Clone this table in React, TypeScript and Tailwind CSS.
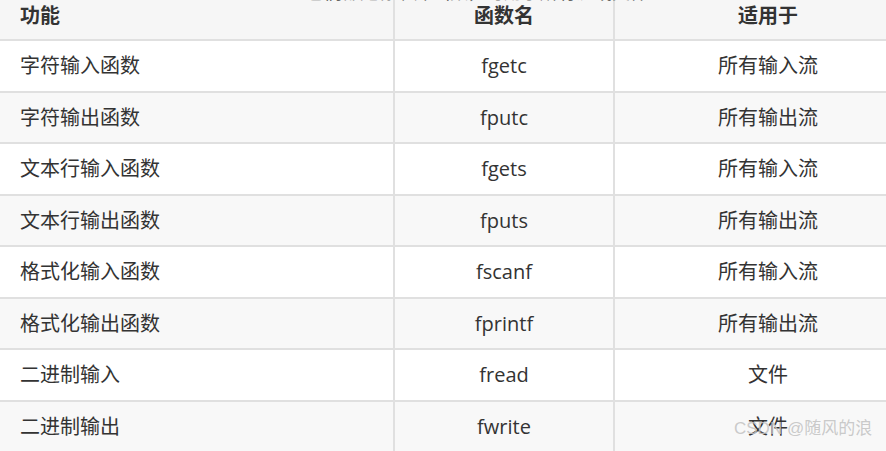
import React from 'react';

type Row = { name: string; fn: string; scope: string };

const rows: Row[] = [
  { name: '字符输入函数', fn: 'fgetc', scope: '所有输入流' },
  { name: '字符输出函数', fn: 'fputc', scope: '所有输出流' },
  { name: '文本行输入函数', fn: 'fgets', scope: '所有输入流' },
  { name: '文本行输出函数', fn: 'fputs', scope: '所有输出流' },
  { name: '格式化输入函数', fn: 'fscanf', scope: '所有输入流' },
  { name: '格式化输出函数', fn: 'fprintf', scope: '所有输出流' },
  { name: '二进制输入', fn: 'fread', scope: '文件' },
  { name: '二进制输出', fn: 'fwrite', scope: '文件' },
];

const font = { fontFamily: '"Open Sans", "Noto Sans CJK SC", sans-serif' };

export default function App() {
  return (
    <div className="relative w-[886px] h-[451px] overflow-hidden bg-white text-[#333] text-[20px]" style={font}>
      {/* clipped caption line above the table */}
      <div className="absolute left-[306px] top-[-19px] z-10 text-[18px] text-[#666] whitespace-nowrap leading-[22px]">
        它们都是标准库函数，可用于所有流或文件
      </div>

      <div className="w-[921px] -mt-[7px]">
        {/* header */}
        <div className="flex h-[48px] bg-[#f6f6f6] border-b-2 border-[#e0e0e0] font-bold">
          <div className="w-[395px] border-r-2 border-[#e0e0e0] flex items-center pl-[20px]">功能</div>
          <div className="w-[220px] border-r-2 border-[#e0e0e0] flex items-center justify-center">函数名</div>
          <div className="flex-1 flex items-center justify-center">适用于</div>
        </div>

        {rows.map((r, i) => (
          <div
            key={r.fn}
            className={`flex h-[51.5px] border-b-2 border-[#e0e0e0] ${i % 2 === 1 ? 'bg-[#f8f8f8]' : 'bg-white'}`}
          >
            <div className="w-[395px] border-r-2 border-[#e0e0e0] flex items-center pl-[20px] pt-[1px]">{r.name}</div>
            <div className="w-[220px] border-r-2 border-[#e0e0e0] flex items-center justify-center pt-[1px]">{r.fn}</div>
            <div className="flex-1 flex items-center justify-center pt-[1px]">{r.scope}</div>
          </div>
        ))}
      </div>

      {/* watermark */}
      <div
        className="absolute left-[734px] top-[416px] text-[17px] text-[#c4c4c4]/90 whitespace-nowrap"
        style={{ fontFamily: '"Liberation Sans", "Noto Sans CJK SC", sans-serif' }}
      >
        CSDN @随风的浪
      </div>
    </div>
  );
}
